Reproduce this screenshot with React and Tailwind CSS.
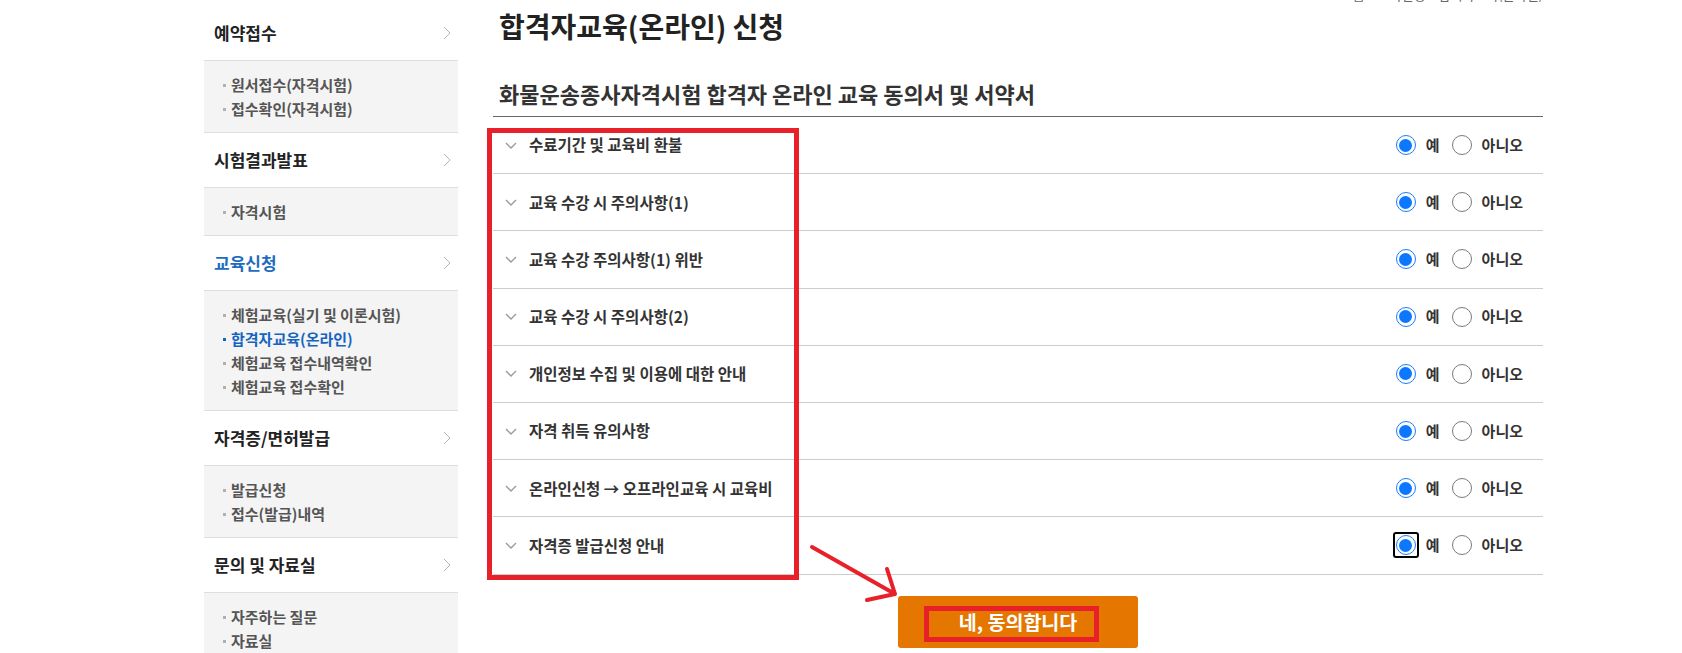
import React from 'react';

const menu = [
  { title: '예약접수', items: ['원서접수(자격시험)', '접수확인(자격시험)'] },
  { title: '시험결과발표', items: ['자격시험'] },
  {
    title: '교육신청',
    active: true,
    items: ['체험교육(실기 및 이론시험)', '합격자교육(온라인)', '체험교육 접수내역확인', '체험교육 접수확인'],
    current: 1,
  },
  { title: '자격증/면허발급', items: ['발급신청', '접수(발급)내역'] },
  { title: '문의 및 자료실', items: ['자주하는 질문', '자료실'] },
];

const terms = [
  '수료기간 및 교육비 환불',
  '교육 수강 시 주의사항(1)',
  '교육 수강 주의사항(1) 위반',
  '교육 수강 시 주의사항(2)',
  '개인정보 수집 및 이용에 대한 안내',
  '자격 취득 유의사항',
  '온라인신청 → 오프라인교육 시 교육비',
  '자격증 발급신청 안내',
];

const SideChevron = () => (
  <svg width="8" height="14" viewBox="0 0 8 14" fill="none">
    <path d="M1 1l6 6-6 6" stroke="#b5b5b5" strokeWidth="1" />
  </svg>
);

const RowChevron = () => (
  <svg width="12" height="7" viewBox="0 0 12 7" fill="none">
    <path d="M1 1l5 5 5-5" stroke="#9a9a9a" strokeWidth="1.4" />
  </svg>
);

// 라디오 버튼 (크롬 기본 모양 흉내)
const Radio = ({ checked, focus }) => (
  <span className="relative inline-flex">
    {focus && <span className="absolute -inset-[3px] border-2 border-black rounded-[3px]"></span>}
    {checked ? (
      <span className="w-5 h-5 rounded-full border-[1.5px] border-[#1a7cff] bg-white flex items-center justify-center">
        <span className="w-[13px] h-[13px] rounded-full bg-[#0b78ff]"></span>
      </span>
    ) : (
      <span className="w-5 h-5 rounded-full border-[1.5px] border-[#7a7a7a] bg-white"></span>
    )}
  </span>
);

const Sidebar = () => (
  <aside className="w-[254px] shrink-0 mt-[6px]">
    {menu.map((m) => (
      <div key={m.title}>
        <div className="h-[54px] flex items-center justify-between pl-[10px] pr-[7px]">
          <span className={`text-[17px] font-bold ${m.active ? 'text-[#1e6cc0]' : 'text-[#222]'}`}>{m.title}</span>
          <SideChevron />
        </div>
        <ul className="bg-[#f4f4f4] border-y border-[#dedede] pt-3 pb-[11px] pl-[19px]">
          {m.items.map((it, i) => {
            const on = m.current === i;
            return (
              <li key={it} className="flex items-center h-6 text-[15px] font-semibold">
                <span className={`w-[3px] h-[3px] mr-[5px] ${on ? 'bg-[#1565c0]' : 'bg-[#b0b0b0]'}`}></span>
                <span className={on ? 'text-[#1565c0]' : 'text-[#555]'}>{it}</span>
              </li>
            );
          })}
        </ul>
      </div>
    ))}
  </aside>
);

export default function App() {
  return (
    <div className="w-[1682px] h-[653px] overflow-hidden bg-white font-['Noto_Sans_CJK_KR','Noto_Sans',sans-serif] text-[#333]">
      <div className="flex pl-[204px] gap-[35px]">
        <Sidebar />

        <main className="w-[1050px] relative">
          {/* 위쪽 경로 (잘려서 아래만 보임) */}
          <div className="absolute right-0 -top-[13px] text-[13px] leading-[16px] text-[#666]">
            홈 &gt; 교육신청 &gt; 합격자교육(온라인)
          </div>

          <h1 className="pt-[7px] pl-[6px] text-[28px] leading-[38px] font-bold text-[#222]">합격자교육(온라인) 신청</h1>

          <h2 className="mt-[32px] pb-[7px] pl-[6px] text-[22px] leading-[32px] font-bold text-[#333] border-b border-[#666]">
            화물운송종사자격시험 합격자 온라인 교육 동의서 및 서약서
          </h2>

          <ul>
            {terms.map((t, i) => (
              <li key={t} className="h-[57.2px] border-b border-[#cccccc] flex items-center justify-between pl-[12px] pr-5">
                <div className="flex items-center gap-[12px]">
                  <RowChevron />
                  <span className="text-[15.5px] font-bold text-[#333]">{t}</span>
                </div>
                <div className="flex items-center text-[15px] font-bold text-[#333]">
                  <Radio checked focus={i === terms.length - 1} />
                  <span className="ml-[10px] mr-[12px]">예</span>
                  <Radio />
                  <span className="ml-[10px]">아니오</span>
                </div>
              </li>
            ))}
          </ul>

          <div className="flex justify-center mt-[21px]">
            <button className="relative w-[240px] h-[52px] bg-[#e57600] rounded-[3px] text-white text-[19.5px] font-bold">
              네, 동의합니다
              <span className="absolute left-[26px] top-[10px] w-[175px] h-[36px] border-[5px] border-[#e8202a]"></span>
            </button>
          </div>

          {/* 빨간 표시 상자 */}
          <div className="absolute left-[-6px] top-[128px] w-[312px] h-[452px] border-[5px] border-[#e8202a] pointer-events-none"></div>

          {/* 빨간 화살표 */}
          <svg className="absolute left-[310px] top-[541px]" width="100" height="70" viewBox="0 0 100 70" fill="none">
            <path d="M9 6L92 53M84 28L92 53L64 59" stroke="#e8202a" strokeWidth="4" strokeLinecap="round" strokeLinejoin="round" />
          </svg>
        </main>
      </div>
    </div>
  );
}
